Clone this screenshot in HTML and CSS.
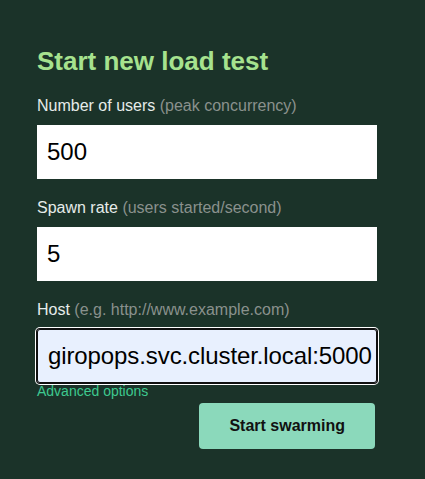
FILE: index.html
```html
<!DOCTYPE html>
<html lang="en">
<head>
<meta charset="utf-8">
<title>Start new load test</title>
<link rel="stylesheet" href="styles.css">
</head>
<body>
<form class="panel">
  <h2 class="title">Start new load test</h2>
  <div class="field">
    <label class="label" for="users">Number of users <span class="hint">(peak concurrency)</span></label>
    <input class="input" id="users" type="text" value="500">
  </div>
  <div class="field">
    <label class="label" for="rate">Spawn rate <span class="hint">(users started/second)</span></label>
    <input class="input" id="rate" type="text" value="5">
  </div>
  <div class="field field-last">
    <label class="label" for="host">Host <span class="hint">(e.g. http://www.example.com)</span></label>
    <input class="input input-focused" id="host" type="text" value="giropops.svc.cluster.local:5000">
    <a class="advanced" href="#">Advanced options</a>
  </div>
  <div class="actions">
    <button class="submit" type="button">Start swarming</button>
  </div>
</form>
</body>
</html>
```
FILE: styles.css
```css
html, body {
  margin: 0;
  padding: 0;
  background: #1b3329;
  font-family: "Liberation Sans", Arial, sans-serif;
}

.panel {
  width: 340px;
  padding: 46px 0 0 37px;
  display: flex;
  flex-direction: column;
}

.title {
  margin: 0 0 20px;
  font-size: 26px;
  font-weight: bold;
  line-height: normal;
  color: #a6e28e;
}

.field {
  display: flex;
  flex-direction: column;
  margin-bottom: 20px;
}

.field-last {
  margin-bottom: 0;
}

.label {
  font-size: 16px;
  line-height: normal;
  color: #e6ecea;
  margin-bottom: 10px;
}

.hint {
  color: #8a918d;
}

.input {
  box-sizing: border-box;
  width: 340px;
  height: 54px;
  margin: 0;
  padding: 0 10px;
  border: none;
  border-radius: 0;
  background: #ffffff;
  font-family: "Liberation Sans", Arial, sans-serif;
  font-size: 24px;
  color: #000000;
  outline: none;
}

.input-focused {
  padding: 0 2px 0 11px;
  letter-spacing: -0.1px;
  background: #e8f0fe;
  border-radius: 3px;
  box-shadow: inset 0 0 0 1px #101010, 0 0 0 1px #101010, 0 0 0 2px #ffffff;
}

.advanced {
  font-size: 14px;
  line-height: normal;
  color: #3ec98f;
  text-decoration: none;
  align-self: flex-start;
}

.actions {
  display: flex;
  justify-content: flex-end;
  padding: 4px 2px 0 0;
}

.submit {
  height: 46px;
  padding: 0 30px;
  border: none;
  border-radius: 4px;
  background: #8bd9bb;
  color: #111111;
  font-family: "Liberation Sans", Arial, sans-serif;
  font-size: 16px;
  font-weight: bold;
}
```
